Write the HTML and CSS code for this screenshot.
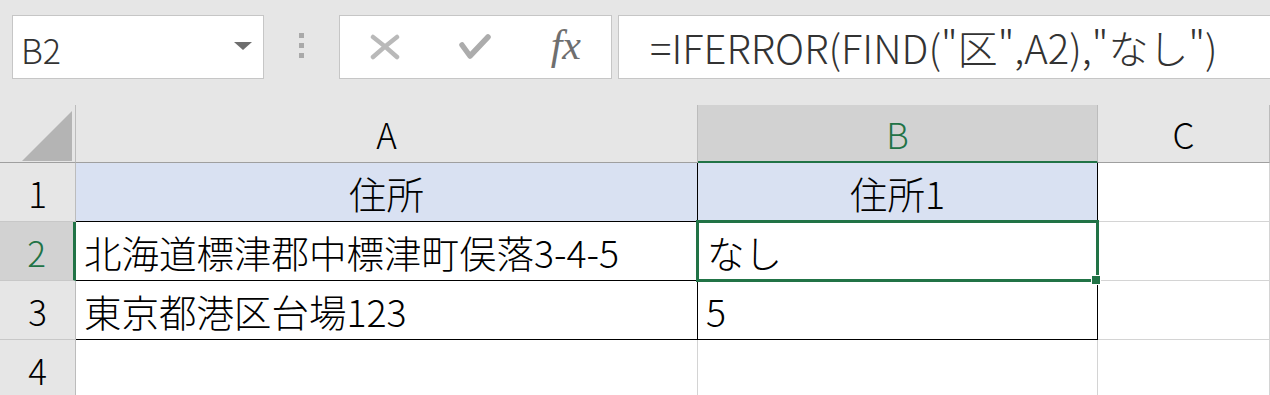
FILE: index.html
```html
<!DOCTYPE html>
<html lang="ja">
<head>
    <meta charset="UTF-8">
    <title>Excel - IFERROR FIND</title>
    <link rel="stylesheet" href="styles.css">
</head>
<body>

<div class="toolbar">
    <div class="name-box">
        <span class="name">B2</span>
        <span class="arrow"></span>
    </div>
    <div class="grip"><i></i><i></i><i></i></div>
    <div class="buttons">
        <span class="btn">
            <svg width="30" height="26" viewBox="0 0 30 26">
                <path d="M3 3 Q15 12 27 23 M27 3 Q14 13 3 23" stroke="#b9b9b9" stroke-width="4.5" stroke-linecap="round" fill="none"/>
            </svg>
        </span>
        <span class="btn">
            <svg width="32" height="26" viewBox="0 0 32 26">
                <path d="M3 11 L11 22 L29 3" stroke="#acacac" stroke-width="5.5" stroke-linecap="round" stroke-linejoin="round" fill="none"/>
            </svg>
        </span>
        <span class="btn fx">fx</span>
    </div>
    <div class="formula">=IFERROR(FIND("区",A2),"なし")</div>
</div>

<div class="sheet">
    <!-- header row -->
    <div class="corner">
        <svg width="52" height="52" viewBox="0 0 52 52"><polygon points="51,1 51,51 1,51" fill="#b4b4b4"/></svg>
    </div>
    <div class="col-head">A</div>
    <div class="col-head active">B</div>
    <div class="col-head">C</div>

    <!-- row 1 -->
    <div class="row-head">1</div>
    <div class="cell tbl head">住所</div>
    <div class="cell tbl head">住所1</div>
    <div class="cell"></div>

    <!-- row 2 -->
    <div class="row-head active">2</div>
    <div class="cell tbl">北海道標津郡中標津町俣落3-4-5</div>
    <div class="cell tbl selected">なし<span class="handle"></span></div>
    <div class="cell"></div>

    <!-- row 3 -->
    <div class="row-head">3</div>
    <div class="cell tbl">東京都港区台場123</div>
    <div class="cell tbl">5</div>
    <div class="cell"></div>

    <!-- row 4 -->
    <div class="row-head">4</div>
    <div class="cell"></div>
    <div class="cell"></div>
    <div class="cell"></div>
</div>

</body>
</html>
```

FILE: styles.css
```css
body {
    margin: 0;
    background-color: #e6e6e6;
    font-family: 'Noto Sans CJK JP', 'Noto Sans', sans-serif;
    font-weight: 300;
    color: #000;
    overflow: hidden;
}

/* formula bar */
.toolbar {
    display: flex;
    height: 105px;
    padding: 15px 0 0 12px;
    box-sizing: border-box;
}

.toolbar > div {
    flex-shrink: 0;
}

.name-box,
.buttons,
.formula {
    height: 64px;
    box-sizing: border-box;
    background-color: #fff;
    border: 1px solid #c6c6c6;
}

.name-box {
    width: 252px;
    display: flex;
    align-items: center;
    justify-content: space-between;
    padding: 4px 11px 0 8px;
}

.name {
    font-size: 34px;
    color: #333;
}

.arrow {
    width: 0;
    height: 0;
    border-left: 9px solid transparent;
    border-right: 9px solid transparent;
    border-top: 8px solid #6e6e6e;
    margin-bottom: 6px;
}

.grip {
    width: 75px;
    display: flex;
    flex-direction: column;
    align-items: center;
    gap: 5px;
    padding-top: 18px;
}

.grip i {
    width: 5px;
    height: 5px;
    background-color: #a9a9a9;
}

.buttons {
    width: 273px;
    display: flex;
}

.btn {
    flex: 1;
    display: flex;
    align-items: center;
    justify-content: center;
}

.fx {
    font-family: 'Liberation Serif', serif;
    font-style: italic;
    font-weight: 400;
    font-size: 42px;
    color: #6f6f6f;
    padding-bottom: 4px;
}

.formula {
    width: 700px;
    margin-left: 6px;
    border-right: none;
    padding-left: 31px;
    display: flex;
    align-items: center;
    font-size: 40px;
    color: #333;
}

/* sheet */
.sheet {
    display: grid;
    grid-template-columns: 76px 622px 400px 1fr;
    grid-template-rows: 58px 59px 59px 59px 59px;
    background-color: #fff;
}

.sheet > div {
    box-sizing: border-box;
    display: flex;
    align-items: center;
    font-size: 37.5px;
}

.corner {
    background-color: #e6e6e6;
    border-right: 1px solid #bcbcbc;
    border-bottom: 1px solid #9f9f9f;
    padding: 5px 0 0 21px;
}

.col-head {
    background-color: #e6e6e6;
    border-right: 1px solid #bcbcbc;
    border-bottom: 1px solid #9f9f9f;
    justify-content: center;
    font-size: 35px !important;
}

.col-head.active {
    background-color: #d2d2d2;
    color: #217346;
    border-bottom: 2px solid #217346;
}

.row-head {
    background-color: #e6e6e6;
    border-right: 1px solid #bcbcbc;
    border-bottom: 1px solid #c8c8c8;
    justify-content: center;
    font-size: 35px !important;
}

.row-head.active {
    background-color: #d2d2d2;
    color: #217346;
    border-right: 3px solid #217346;
}

.cell {
    border-right: 1px solid #d4d4d4;
    border-bottom: 1px solid #d4d4d4;
    padding-left: 8px;
    white-space: nowrap;
}

.cell.tbl {
    border-right-color: #000;
    border-bottom-color: #000;
}

.cell.head {
    background-color: #d9e1f2;
    justify-content: center;
    padding-left: 0;
}

.cell.selected {
    position: relative;
    padding-left: 9px;
}

.cell.selected::after {
    content: '';
    position: absolute;
    top: -2px;
    left: -2px;
    right: -2px;
    bottom: -2px;
    border: 3px solid #217346;
}

.handle {
    position: absolute;
    right: -3px;
    bottom: -4px;
    width: 8px;
    height: 8px;
    background-color: #217346;
    box-shadow: 0 0 0 1px #fff;
    z-index: 1;
}
```
